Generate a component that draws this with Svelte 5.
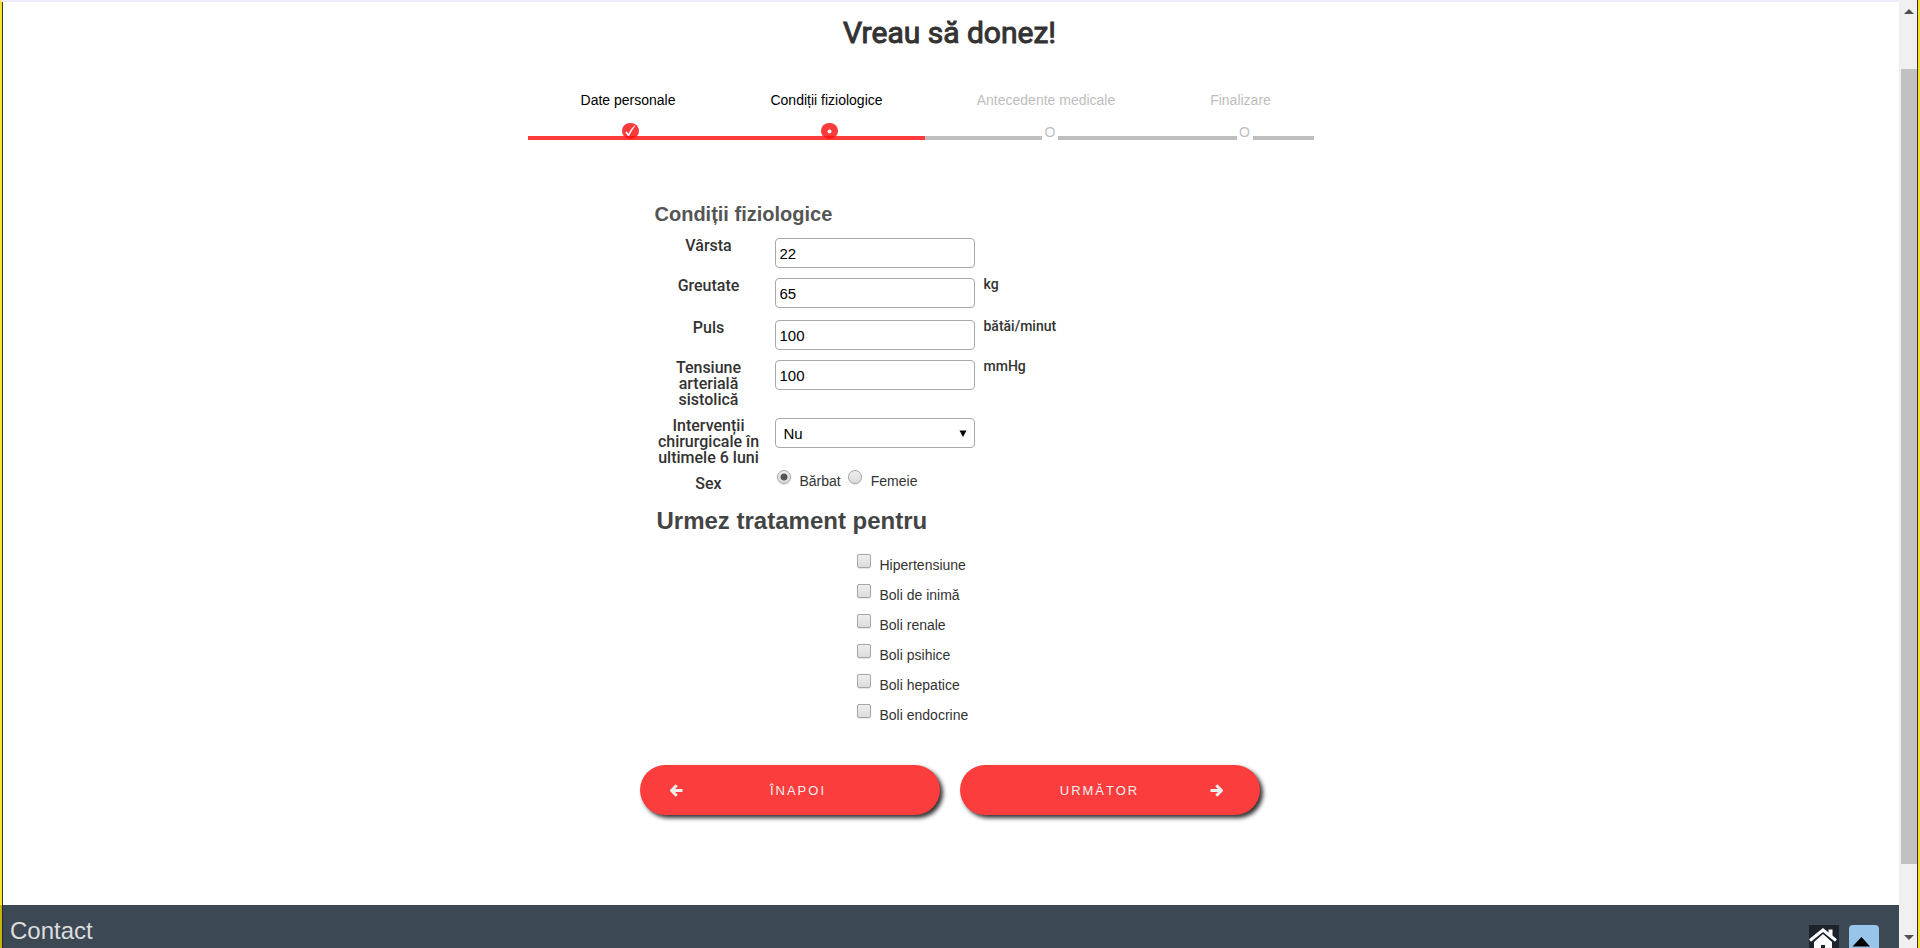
<script>
  const steps = [
    { name: 'Date personale', state: 'done' },
    { name: 'Condiții fiziologice', state: 'current' },
    { name: 'Antecedente medicale', state: 'todo' },
    { name: 'Finalizare', state: 'todo' }
  ];
  const fields = [
    { id: 'varsta', label: 'Vârsta', value: '22', unit: '' },
    { id: 'greutate', label: 'Greutate', value: '65', unit: 'kg' },
    { id: 'puls', label: 'Puls', value: '100', unit: 'bătăi/minut' },
    { id: 'tensiune', label: 'Tensiune arterială sistolică', value: '100', unit: 'mmHg' }
  ];
  const conditions = [
    'Hipertensiune',
    'Boli de inimă',
    'Boli renale',
    'Boli psihice',
    'Boli hepatice',
    'Boli endocrine'
  ];
  let sex = $state('b');
</script>

<div class="window">
  <div class="page">
    <main>
      <h1>Vreau să donez!</h1>

      <ol class="steps">
        {#each steps as step}
          <li class={step.state}>
            <span>{step.name}</span>
            {#if step.state === 'todo'}
              <i class="open">O</i>
            {:else}
              <svg width="17" height="16" viewBox="0 0 17 16" aria-hidden="true">
                <rect width="17" height="16" rx="8" fill="#fb3b3b" />
                <path d="M2.5 13h12Q12 16 8.500 16T2.500 13Z" fill="#fc1616" />
                {#if step.state === 'done'}
                  <path d="M3.300 9.300l1.400-.8 1.700 2.200Q8.500 6 12.800 2.300l.5.4Q9.800 7 7.100 13H5.900Z" fill="#fff" />
                {:else}
                  <circle cx="8.500" cy="8.500" r="2" fill="#fff" />
                {/if}
              </svg>
            {/if}
          </li>
        {/each}
      </ol>

      <form>
        <h3>Condiții fiziologice</h3>
        <div class="fields">
          {#each fields as f}
            <label class="name" for={f.id}>{f.label}</label>
            <input class="box" id={f.id} type="text" value={f.value} />
            <span class="unit">{f.unit}</span>
          {/each}
          <label class="name" for="interventii">Intervenții chirurgicale în ultimele 6 luni</label>
          <div class="select">
            <select class="box" id="interventii">
              <option>Nu</option>
              <option>Da</option>
            </select>
            <svg width="8" height="7" viewBox="0 0 8 7" aria-hidden="true"><path d="M.5.500h7L4 7Z" /></svg>
          </div>
          <span></span>
          <span class="name" id="sex">Sex</span>
          <div class="radios" role="radiogroup" aria-labelledby="sex">
            <label><input type="radio" name="sex" value="b" bind:group={sex} /><span>Bărbat</span></label>
            <label><input type="radio" name="sex" value="f" bind:group={sex} /><span>Femeie</span></label>
          </div>
        </div>

        <h2>Urmez tratament pentru</h2>
        <div class="checks">
          {#each conditions as c}
            <label><input type="checkbox" /><span>{c}</span></label>
          {/each}
        </div>
      </form>

      <div class="actions">
        <button class="back" type="button">
          <svg width="13" height="13" viewBox="0 0 13 13" aria-hidden="true"><path d="M6.700 1.200L1.500 6.500l5.200 5.300M2 6.500h10.500" /></svg>
          <span>ÎNAPOI</span>
        </button>
        <button class="next" type="button">
          <span>URMĂTOR</span>
          <svg width="13" height="13" viewBox="0 0 13 13" aria-hidden="true"><path d="M6.300 1.200l5.200 5.300-5.200 5.300M11 6.500H.5" /></svg>
        </button>
      </div>
    </main>

    <footer>
      <div class="title">Contact</div>
      <a class="home" href="#home" aria-label="Acasă">
        <svg width="30" height="30" viewBox="0 0 30 30" aria-hidden="true">
          <path d="M5 17L14 9l9 8V28H5Z" fill="#fff" />
          <path d="M19.500 4.500h4V13l-4-4Z" fill="#fff" />
          <path d="M2 17.500L14 7.500l12 10" fill="none" stroke="#1c232b" stroke-width="1.500" />
          <path d="M1 15.500L14 5l13 10.500" fill="none" stroke="#fff" stroke-width="3" />
          <rect x="12" y="20" width="4" height="8" fill="#1c232b" />
        </svg>
      </a>
      <a class="top" href="#top" aria-label="Sus">
        <svg width="30" height="30" viewBox="0 0 30 30" aria-hidden="true"><path d="M3.500 21.500L12.500 12l8.500 9.500Z" /></svg>
      </a>
    </footer>
  </div>

  <div class="scroll">
    <svg width="10" height="5" viewBox="0 0 10 5" aria-hidden="true"><path d="M5 0l5 5H0Z" /></svg>
    <div class="track"><div class="thumb"></div></div>
    <svg width="10" height="5" viewBox="0 0 10 5" aria-hidden="true"><path d="M0 0h10L5 5Z" /></svg>
  </div>
</div>

<style>
  :global(body) {
    background: #fff;
    font-family: 'Liberation Sans', Arial, sans-serif;
    font-size: 14px;
    color: #333;
  }
  .window {
    box-sizing: border-box;
    height: 100vh;
    display: flex;
    overflow: hidden;
    border-right: 2px solid #f9df2c;
  }
  .page {
    flex: 1;
    min-width: 0;
    display: flex;
    flex-direction: column;
    overflow: hidden;
  }
  main {
    flex: none;
    display: flex;
    flex-direction: column;
    align-items: center;
    padding: 0 2px 90px 0;
    border-left: 2px solid #fde02f;
    border-top: 2px solid #eeebfd;
    box-shadow: inset 1px 0 #333;
  }
  h1 {
    margin: 13px 0 0;
    font: 400 30px/36px Roboto, sans-serif;
    -webkit-text-stroke: 1px #333;
  }
  .steps {
    width: 786px;
    max-width: 100%;
    box-sizing: border-box;
    display: grid;
    grid-template-columns: 201fr 196fr 243fr 146fr;
    margin: 40px 58px 0 0;
    padding: 0;
    list-style: none;
  }
  .steps li {
    display: flex;
    flex-direction: column;
    align-items: center;
    height: 45px;
    border-bottom: 4px solid #bebebe;
    color: #bebebe;
    line-height: 18px;
  }
  .steps .done,
  .steps .current {
    border-color: #fb3b3b;
    color: #000;
  }
  .steps svg {
    display: block;
    flex: none;
    margin: 14px 0 0 5px;
  }
  .open {
    flex: none;
    margin: 14px 0 0 8px;
    width: 16px;
    height: 18px;
    background: #fff;
    text-align: center;
    font-style: normal;
  }
  form {
    width: 480px;
    margin: 62px 110px 0 0;
    box-sizing: border-box;
  }
  h3 {
    margin: 0 0 12px 0;
    font-size: 20px;
    line-height: 24px;
    color: #555;
  }
  .fields {
    display: grid;
    grid-template-columns: 108px 200px 1fr;
    grid-template-rows: minmax(30px, auto) minmax(32px, auto);
    gap: 10px 12px;
    align-items: start;
  }
  .name,
  .unit {
    font: 500 16px/16px Roboto, sans-serif;
    text-align: center;
  }
  .unit {
    font-size: 14px;
    line-height: 12px;
    text-align: left;
    margin-left: -3px;
  }
  .box {
    box-sizing: border-box;
    width: 100%;
    height: 30px;
    padding: 0 4px;
    border: 1px solid #a9a9a9;
    border-radius: 4px;
    background: #fff;
    color: #000;
    font: 15px 'Liberation Sans', Arial, sans-serif;
  }
  .select {
    display: grid;
    align-items: center;
  }
  .select > * {
    grid-area: 1 / 1;
  }
  .select svg {
    justify-self: end;
    margin-right: 8px;
    pointer-events: none;
  }
  select.box {
    appearance: none;
    padding-left: 8px;
  }
  .radios {
    display: flex;
    gap: 7px;
    margin: -6px 0 0 2px;
  }
  .radios label,
  .checks label {
    display: flex;
    gap: 9px;
    line-height: 16px;
  }
  .radios label span,
  .checks label span {
    padding-top: 3px;
  }
  input[type='radio'],
  input[type='checkbox'] {
    appearance: none;
    box-sizing: border-box;
    width: 14px;
    height: 14px;
    margin: 0;
    border: 1px solid #a5a5a5;
    border-radius: 2px;
    background: linear-gradient(#eee, #dcdcdc);
    box-shadow: 0 1px 1px #e4e4e4;
  }
  input[type='radio'] {
    border-radius: 50%;
  }
  input[type='radio']:checked {
    background: radial-gradient(circle, #555 0 3px, transparent 4px), linear-gradient(#eee, #dcdcdc);
  }
  input[type='checkbox']:checked {
    background: #555;
  }
  h2 {
    margin: 15px 0 19px 2px;
    font-size: 24px;
    line-height: 28px;
    color: #444;
  }
  .checks {
    display: grid;
    grid-auto-rows: 30px;
    margin-left: 202px;
    justify-content: start;
  }
  .actions {
    display: flex;
    flex-wrap: wrap;
    gap: 20px;
    margin-top: 31px;
  }
  button {
    display: flex;
    align-items: center;
    width: 300px;
    height: 50px;
    border: 0;
    border-radius: 25px;
    background: #fb3d3d;
    box-shadow: 3px 3px 4px #333;
    color: #eee;
    font: 13px 'Liberation Sans', Arial, sans-serif;
    letter-spacing: 2px;
  }
  button span {
    flex: 1;
    text-align: center;
  }
  button svg {
    fill: none;
    stroke: #eee;
    stroke-width: 3;
  }
  .back {
    padding: 0 26px 0 30px;
  }
  .next {
    padding: 0 37px 0 30px;
  }
  footer {
    flex: 1 0 43px;
    box-sizing: border-box;
    display: flex;
    align-items: flex-start;
    gap: 10px;
    padding: 12px 20px 0 8px;
    border-left: 2px solid #c9b312;
    box-shadow: inset 1px 0 #252b33;
    background: #3d4855;
    color: #ddd;
  }
  .title {
    flex: 1;
    font-size: 24px;
    line-height: 28px;
  }
  footer a {
    width: 30px;
    height: 30px;
    margin-top: 8px;
    background: #1c232b;
  }
  footer svg {
    display: block;
  }
  footer .top {
    border-radius: 4px;
    background: #99c4ea;
  }
  .scroll {
    box-sizing: border-box;
    width: 19px;
    display: flex;
    flex-direction: column;
    align-items: center;
    padding: 9px 0 8px 2px;
    border-right: 1px solid #333;
    background: #f0f0f0;
    fill: #505050;
  }
  .track {
    flex: 1;
    align-self: stretch;
    padding: 55px 0 71px;
  }
  .thumb {
    height: 100%;
    background: #c1c1c1;
  }
</style>
